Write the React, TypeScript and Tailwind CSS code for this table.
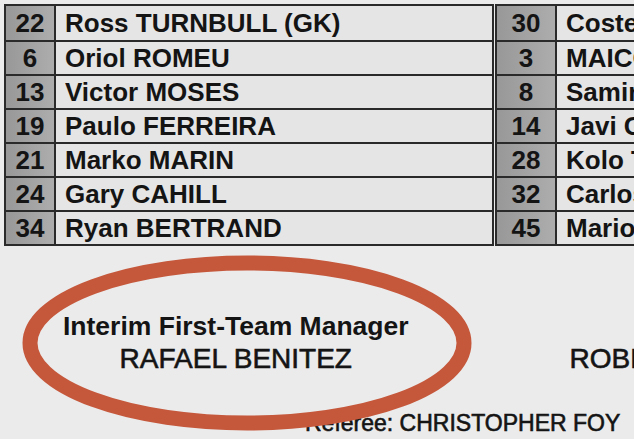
const home = [
  ["22", "Ross TURNBULL (GK)"],
  ["6", "Oriol ROMEU"],
  ["13", "Victor MOSES"],
  ["19", "Paulo FERREIRA"],
  ["21", "Marko MARIN"],
  ["24", "Gary CAHILL"],
  ["34", "Ryan BERTRAND"],
];

const away = [
  ["30", "Costel PANTILIMON"],
  ["3", "MAICON"],
  ["8", "Samir NASRI"],
  ["14", "Javi GARCIA"],
  ["28", "Kolo TOURE"],
  ["32", "Carlos TEVEZ"],
  ["45", "Mario BALOTELLI"],
];

function SubsTable({ rows, numWidth, className }: { rows: string[][]; numWidth: string; className: string }) {
  return (
    <div className={`shrink-0 flex flex-col border-2 border-[#2a2a2a] ${className}`}>
      {rows.map(([num, name], i) => (
        <div key={num} className={`flex h-[34px] ${i > 0 ? "border-t-2 border-[#2a2a2a]" : ""}`}>
          <div
            className={`${numWidth} shrink-0 flex items-center justify-center border-r-2 border-[#2a2a2a] bg-gradient-to-r from-[#989898] to-[#adadad] text-[26px] font-bold`}
          >
            {num}
          </div>
          <div className="flex-1 flex items-center pl-[9px] bg-[#e5e5e5] text-[26px] font-bold whitespace-nowrap">
            {name}
          </div>
        </div>
      ))}
    </div>
  );
}

export default function App() {
  return (
    <div
      className="relative w-[634px] h-[439px] overflow-hidden bg-[#ebebeb] text-[#141414]"
      style={{ fontFamily: '"Liberation Sans", Arial, sans-serif' }}
    >
      {/* substitutes, both sides */}
      <div className="flex gap-[1px] pt-[4px] pl-[4px] w-[900px]">
        <SubsTable rows={home} numWidth="w-[50px]" className="w-[490px]" />
        <SubsTable rows={away} numWidth="w-[60px]" className="w-[320px]" />
      </div>

      <div className="flex items-end mt-[67px]">
        <div className="ml-[63px] flex flex-col items-center w-[350px]">
          <span className="text-[26.5px] font-bold leading-none whitespace-nowrap">Interim First-Team Manager</span>
          <span className="text-[28px] leading-none mt-[5px] whitespace-nowrap [-webkit-text-stroke:0.6px_#141414]">
            RAFAEL BENITEZ
          </span>
        </div>
        <span className="ml-[161px] text-[28px] leading-none whitespace-nowrap [-webkit-text-stroke:0.6px_#141414]">
          ROBERTO MANCINI
        </span>
      </div>

      <div className="ml-[305px] mt-[39px] text-[23px] leading-none whitespace-nowrap [-webkit-text-stroke:0.6px_#141414]">
        Referee: CHRISTOPHER FOY
      </div>

      <svg className="absolute left-[14px] top-[250px] pointer-events-none" width="466" height="190" viewBox="0 0 466 190">
        <ellipse cx="233" cy="93" rx="217" ry="80" fill="none" stroke="#c5573b" strokeWidth="15" />
      </svg>
    </div>
  );
}
